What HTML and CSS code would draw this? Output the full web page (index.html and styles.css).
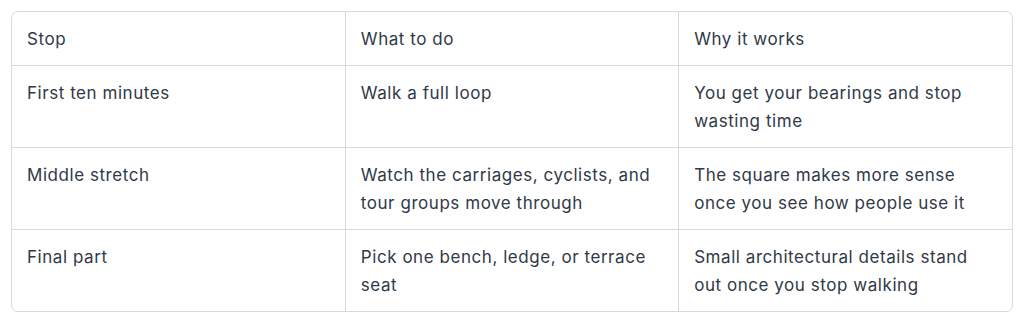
FILE: index.html
```html
<!DOCTYPE html>
<html lang="en">

<head>
  <meta charset="UTF-8">
  <meta name="viewport" content="width=device-width, initial-scale=1.0">
  <title>Square visit plan</title>
  <link rel="stylesheet" href="styles.css">
</head>

<body>

  <div class="table-wrap">
    <table class="plan">
      <thead>
        <tr>
          <th>Stop</th>
          <th>What to do</th>
          <th>Why it works</th>
        </tr>
      </thead>
      <tbody>
        <tr>
          <td>First ten minutes</td>
          <td>Walk a full loop</td>
          <td>You get your bearings and stop wasting time</td>
        </tr>
        <tr>
          <td>Middle stretch</td>
          <td>Watch the carriages, cyclists, and tour groups move through</td>
          <td>The square makes more sense once you see how people use it</td>
        </tr>
        <tr>
          <td>Final part</td>
          <td>Pick one bench, ledge, or terrace seat</td>
          <td>Small architectural details stand out once you stop walking</td>
        </tr>
      </tbody>
    </table>
  </div>

</body>

</html>
```

FILE: styles.css
```css
body {
  font-family: Inter, "Noto Sans", sans-serif;
  background-color: #fff;
  color: #2f3947;
  margin: 0;
  padding: 11px;
}

.table-wrap {
  border: 1px solid #d3dae3;
  border-radius: 7px;
  overflow: hidden;
}

.plan {
  width: 100%;
  border-collapse: collapse;
  table-layout: fixed;
  font-size: 17px;
  letter-spacing: 0.55px;
  line-height: 28px;
}

.plan th,
.plan td {
  text-align: left;
  font-weight: 400;
  vertical-align: top;
  padding: 13px 22px 12px 15px;
  border-right: 1px solid #d3dae3;
  border-bottom: 1px solid #d3dae3;
}

.plan th:last-child,
.plan td:last-child {
  border-right: none;
}

.plan tbody tr:last-child td {
  border-bottom: none;
}
```
